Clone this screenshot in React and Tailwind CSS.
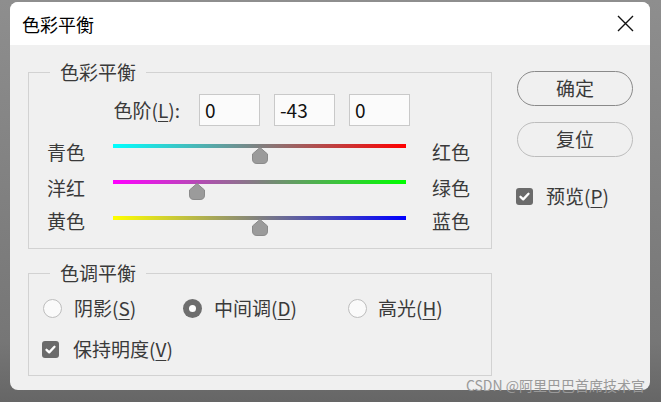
import React from "react";

const F = "font-['Noto_Sans_CJK_SC',sans-serif]";

function Thumb() {
  return (
    <svg width="18" height="17" viewBox="0 0 18 17">
      <path d="M9 0.5 L16.5 7 L16.5 12 Q16.5 16.5 12 16.5 L6 16.5 Q1.5 16.5 1.5 12 L1.5 7 Z" fill="#9b9b9b" stroke="#8a8a8a" strokeWidth="1" />
    </svg>
  );
}

function Check({ className = "" }) {
  return (
    <span className={"flex items-center justify-center w-[17px] h-[17px] rounded-[3px] bg-[#6b6b6b] " + className}>
      <svg width="13" height="13" viewBox="0 0 13 13">
        <path d="M2.5 6.8 L5.2 9.4 L10.5 3.8" fill="none" stroke="#fff" strokeWidth="2.3" strokeLinecap="round" strokeLinejoin="round" />
      </svg>
    </span>
  );
}

function SliderRow({ left, right, grad, value, labelClass = "" }) {
  const pct = ((value + 100) / 200) * 100;
  return (
    <div className="flex h-[36px] pl-[18px]">
      <div className={"w-[66px] leading-[22px] text-[#3a3a3a] " + labelClass}>{left}</div>
      <div className="relative w-[293px] pt-[3px]">
        <div className={"h-[4px] " + grad} />
        <div className="absolute top-[6px]" style={{ left: `calc(${pct}% - 9px)` }}>
          <Thumb />
        </div>
      </div>
      <div className={"ml-[26px] leading-[22px] text-[#3a3a3a] " + labelClass}>{right}</div>
    </div>
  );
}

function Radio({ checked }) {
  if (checked) {
    return (
      <span className="flex items-center justify-center w-[19px] h-[19px] rounded-full bg-[#6e6e6e]">
        <span className="w-[7px] h-[7px] rounded-full bg-white" />
      </span>
    );
  }
  return <span className="w-[19px] h-[19px] rounded-full border border-[#bdbdbd] bg-[#fafafa]" />;
}

export default function App() {
  const U = ({ children }) => <span className="underline underline-offset-[3px] decoration-1">{children}</span>;
  return (
    <div className={"relative w-[661px] h-[402px] overflow-hidden bg-[linear-gradient(to_bottom,#8e8e8e,#767676_85%,#666666)] pt-[2px] pl-[10px] " + F}>
      <div className="w-[640px] h-[388px] rounded-[8px] overflow-hidden bg-[#f0f0f0] flex flex-col">
        <div className="h-[43px] bg-white flex items-center justify-between pl-[12px] pr-[16px] shrink-0">
          <span className="text-[18px] text-black leading-[24px]">色彩平衡</span>
          <svg width="17" height="17" viewBox="0 0 17 17">
            <path d="M1 1 L16 16 M16 1 L1 16" stroke="#111" strokeWidth="1.4" />
          </svg>
        </div>
        <div className="flex pl-[18px] text-[19px] text-[#3a3a3a]">
          <div className="w-[464px]">
            <div className="relative mt-[27px] h-[177px] border border-[#d2d2d2]">
              <span className="absolute left-[21px] top-[-13px] px-[10px] bg-[#f0f0f0] leading-[24px]">色彩平衡</span>
              <div className="pt-[21px]">
                <div className="flex items-center h-[32px]">
                  <div className="w-[170px] text-right pr-[19px] leading-[24px]">
                    色阶(<U>L</U>):
                  </div>
                  <div className="flex gap-[14px]">
                    {["0", "-43", "0"].map((v, i) => (
                      <div key={i} className="w-[61px] h-[32px] border border-[#c9c9c9] bg-[#fbfbfb] pl-[5px] leading-[30px] text-[#111]">
                        {v}
                      </div>
                    ))}
                  </div>
                </div>
                <div className="mt-[15px]">
                  <SliderRow left="青色" right="红色" value={0} grad="bg-[linear-gradient(to_right,#00ffff,#ff0000)]" />
                  <SliderRow left="洋红" right="绿色" value={-43} grad="bg-[linear-gradient(to_right,#ff00ff,#00ff00)]" />
                  <SliderRow left="黄色" right="蓝色" value={0} grad="bg-[linear-gradient(to_right,#ffff00,#0000ff)]" labelClass="-mt-[3px]" />
                </div>
              </div>
            </div>
            <div className="relative mt-[24px] h-[103px] border border-[#d2d2d2]">
              <span className="absolute left-[21px] top-[-13px] px-[10px] bg-[#f0f0f0] leading-[24px]">色调平衡</span>
              <div className="pt-[23px]">
                <div className="flex items-center h-[22px] pl-[14px]">
                  <div className="flex items-center gap-[12px] w-[140px]">
                    <Radio />
                    <span className="leading-[22px]">阴影(<U>S</U>)</span>
                  </div>
                  <div className="flex items-center gap-[12px] w-[165px]">
                    <Radio checked />
                    <span className="leading-[22px]">中间调(<U>D</U>)</span>
                  </div>
                  <div className="flex items-center gap-[11px]">
                    <Radio />
                    <span className="leading-[22px]">高光(<U>H</U>)</span>
                  </div>
                </div>
                <div className="flex items-center gap-[14px] h-[22px] mt-[19px] pl-[13px]">
                  <Check />
                  <span className="leading-[22px]">保持明度(<U>V</U>)</span>
                </div>
              </div>
            </div>
          </div>
          <div className="ml-[25px] w-[116px] pt-[26px]">
            <div className="h-[35px] rounded-full border border-[#8a8a8a] flex items-center justify-center">确定</div>
            <div className="mt-[16px] h-[35px] rounded-full border border-[#bdbdbd] flex items-center justify-center">复位</div>
            <div className="mt-[28px] h-[22px] flex items-center gap-[13px] -ml-[1px]">
              <Check />
              <span className="leading-[22px]">预览(<U>P</U>)</span>
            </div>
          </div>
        </div>
      </div>
      <div className="absolute right-[16px] bottom-[9px] text-[14px] leading-[16px] text-[#9a9a9a]">CSDN @阿里巴巴首席技术官</div>
    </div>
  );
}
